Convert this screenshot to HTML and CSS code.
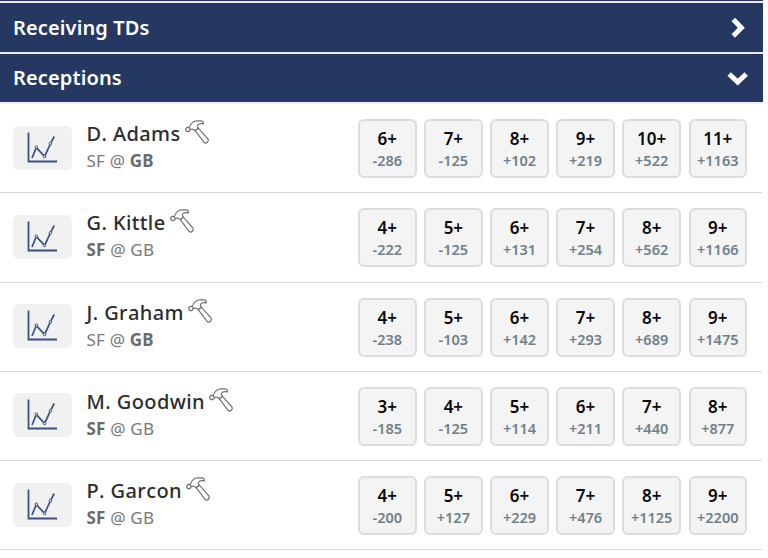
FILE: index.html
```
<!DOCTYPE html>
<html lang="en">
<head>
<meta charset="utf-8">
<title>Player props</title>
<link rel="stylesheet" href="styles.css">
</head>
<body>
<svg class="defs" aria-hidden="true">
  <symbol id="chart" viewBox="0 0 59 44">
    <path d="M15.5 6.5V35.5H44" stroke-width="1.8"/>
    <path d="M19 32L23.3 21.6L31.6 30.4L37.4 17.8L41.2 10.5" stroke-width="1.7"/>
    <g fill="#f1f1f1" stroke-width="1"><circle cx="23.3" cy="21.2" r="1.3"/><circle cx="31.6" cy="30.5" r="1.3"/><circle cx="37.4" cy="17.8" r="1.3"/></g>
  </symbol>
  <symbol id="hammer" viewBox="0 0 24 24">
    <path d="M0.7 8.6L2.3 7.2L4.2 7.7C5.3 4.1 8.5 1 12.5 0.8H16.3L18.3 2V3.9C15.7 3.3 13.5 3.7 12.6 5.3C12 6.4 12.4 7.2 13.4 8.2L10.2 10.6C8.9 9.4 7.3 8.8 5.3 9.5L4.6 11L2.8 11.8L1 10.8Z"/>
    <path d="M10.2 10.6L13.4 8.2L23 19C24 21.4 21.5 24 19.2 22.6Z"/>
    <path d="M4.2 7.7L5.3 9.5"/>
  </symbol>
</svg>
<main class="page">
  <div class="strip"></div>
  <div class="bar"><span>Receiving TDs</span><svg class="chevron" viewBox="0 0 24 24"><path d="M7.3 3.6L15.3 11.8L7.3 19.9"/></svg></div>
  <div class="bar open"><span>Receptions</span><svg class="chevron" viewBox="0 0 24 24"><path d="M3.2 8L11.7 16L20.2 8"/></svg></div>

  <section class="row">
    <div class="chart"><svg><use href="#chart"/></svg></div>
    <div class="player"><div class="name">D. Adams<svg><use href="#hammer"/></svg></div><div class="game">SF @ <b>GB</b></div></div>
    <div class="odds"><div class="odd"><b>6+</b><i>-286</i></div><div class="odd"><b>7+</b><i>-125</i></div><div class="odd"><b>8+</b><i>+102</i></div><div class="odd"><b>9+</b><i>+219</i></div><div class="odd"><b>10+</b><i>+522</i></div><div class="odd"><b>11+</b><i>+1163</i></div></div>
  </section>
  <section class="row">
    <div class="chart"><svg><use href="#chart"/></svg></div>
    <div class="player"><div class="name">G. Kittle<svg><use href="#hammer"/></svg></div><div class="game"><b>SF</b> @ GB</div></div>
    <div class="odds"><div class="odd"><b>4+</b><i>-222</i></div><div class="odd"><b>5+</b><i>-125</i></div><div class="odd"><b>6+</b><i>+131</i></div><div class="odd"><b>7+</b><i>+254</i></div><div class="odd"><b>8+</b><i>+562</i></div><div class="odd"><b>9+</b><i>+1166</i></div></div>
  </section>
  <section class="row">
    <div class="chart"><svg><use href="#chart"/></svg></div>
    <div class="player"><div class="name">J. Graham<svg><use href="#hammer"/></svg></div><div class="game">SF @ <b>GB</b></div></div>
    <div class="odds"><div class="odd"><b>4+</b><i>-238</i></div><div class="odd"><b>5+</b><i>-103</i></div><div class="odd"><b>6+</b><i>+142</i></div><div class="odd"><b>7+</b><i>+293</i></div><div class="odd"><b>8+</b><i>+689</i></div><div class="odd"><b>9+</b><i>+1475</i></div></div>
  </section>
  <section class="row">
    <div class="chart"><svg><use href="#chart"/></svg></div>
    <div class="player"><div class="name">M. Goodwin<svg><use href="#hammer"/></svg></div><div class="game"><b>SF</b> @ GB</div></div>
    <div class="odds"><div class="odd"><b>3+</b><i>-185</i></div><div class="odd"><b>4+</b><i>-125</i></div><div class="odd"><b>5+</b><i>+114</i></div><div class="odd"><b>6+</b><i>+211</i></div><div class="odd"><b>7+</b><i>+440</i></div><div class="odd"><b>8+</b><i>+877</i></div></div>
  </section>
  <section class="row">
    <div class="chart"><svg><use href="#chart"/></svg></div>
    <div class="player"><div class="name">P. Garcon<svg><use href="#hammer"/></svg></div><div class="game"><b>SF</b> @ GB</div></div>
    <div class="odds"><div class="odd"><b>4+</b><i>-200</i></div><div class="odd"><b>5+</b><i>+127</i></div><div class="odd"><b>6+</b><i>+229</i></div><div class="odd"><b>7+</b><i>+476</i></div><div class="odd"><b>8+</b><i>+1125</i></div><div class="odd"><b>9+</b><i>+2200</i></div></div>
  </section>
</main>
</body>
</html>
```
FILE: styles.css
```
* { box-sizing: border-box; }
body { margin: 0; background: #fff; font-family: "Noto Sans", "Open Sans", sans-serif; overflow: hidden; }
.defs { display: none; }
.page { width: 763px; }
.strip { height: 3px; background: #253862; border-bottom: 2px solid #ece8ee; }
.bar {
  display: flex; align-items: center; justify-content: space-between;
  height: 51px; padding: 0 13px 0 13px;
  background: #253862; border-bottom: 2px solid #ece8ee;
  color: #fff; font-size: 20px; font-weight: 600; line-height: 28px; letter-spacing: 0.13px;
}
.bar.open { height: 50px; border-bottom-color: #efeeee; }
.chevron { width: 24px; height: 24px; fill: none; stroke: #fff; stroke-width: 5; }
.row {
  display: flex; align-items: flex-start; width: 762px; height: 89.25px;
  padding-left: 13px; border-bottom: 1px solid #d6d6d6;
}
.chart { width: 59px; height: 44px; margin-top: 21.5px; border-radius: 6px; background: #f1f1f1; }
.chart svg { display: block; width: 59px; height: 44px; fill: none; stroke: #3b5180; }
.player { flex: 1; margin: 15px 0 0 14.5px; }
.name {
  display: flex; align-items: flex-start; height: 30px;
  font-size: 20px; font-weight: 500; line-height: 30px; color: #2c2c2c;
  letter-spacing: 0.4px; font-kerning: none;
}
.name svg { width: 24px; height: 24px; margin: 1px 0 0 4px; fill: none; stroke: #6c6c6c; stroke-width: 1.15; }
.game { font-size: 17px; line-height: 24px; color: #777; letter-spacing: 0.2px; }
.game b { font-weight: 700; color: #6b6b6b; }
.odds { display: grid; grid-template-columns: repeat(6, 58.5px); gap: 7.6px; margin: 15px 15px 0 0; }
.odd {
  height: 59px; padding-top: 7px; text-align: center;
  background: #f4f4f4; border: 2px solid #dcdcdc; border-radius: 6px;
}
.odd b, .odd i { display: block; font-style: normal; white-space: nowrap; }
.odd b { font-size: 17px; font-weight: 600; line-height: 22px; color: #080808; }
.odd i { font-size: 14.5px; font-weight: 600; line-height: 21px; color: #70808a; }
```
